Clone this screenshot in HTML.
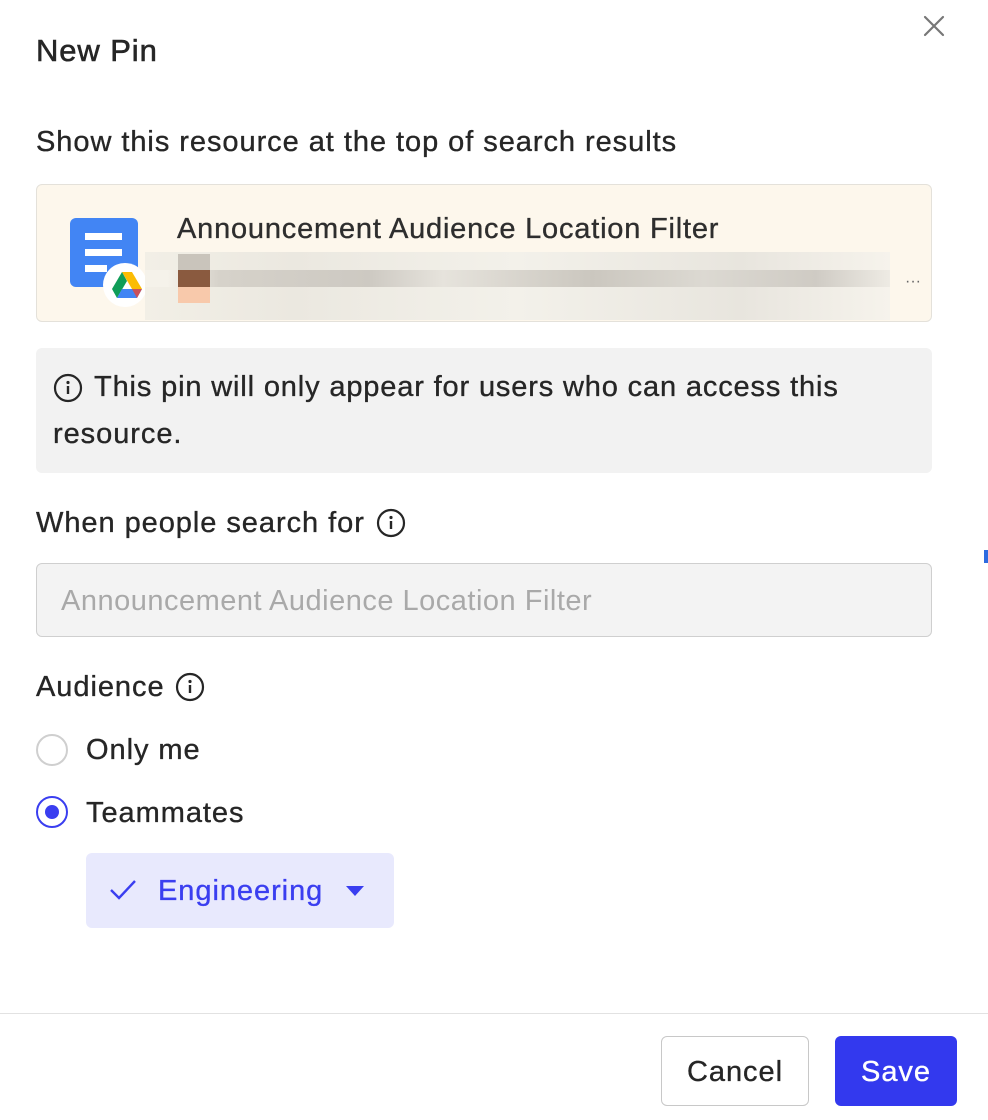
<!DOCTYPE html>
<html><head><style>
body{margin:0;width:988px;height:1120px;background:#fff;font-family:"Liberation Sans",Arial,sans-serif;color:#262626;position:relative;overflow:hidden}
.a{position:absolute}
.t{font-size:29px;letter-spacing:0.95px;white-space:nowrap;-webkit-text-stroke:0.35px currentColor}
</style></head><body>
<div class="a" style="left:36px;top:33px;font-size:31px;letter-spacing:0.9px;-webkit-text-stroke:0.6px #262626">New Pin</div>
<svg class="a" style="left:922px;top:14px" width="24" height="24"><path d="M3 3L21 21M21 3L3 21" stroke="#777" stroke-width="2.2" stroke-linecap="round"/></svg>
<div class="a t" style="left:36px;top:126px">Show this resource at the top of search results</div>
<div class="a" style="left:36px;top:184px;width:894px;height:136px;background:#fdf7ec;border:1px solid #e4e1da;border-radius:6px"></div>
<div class="a" style="left:70px;top:218px;width:68px;height:69px;background:#4285f4;border-radius:6px"></div>
<div class="a" style="left:85px;top:233px;width:37px;height:7px;background:#fff"></div>
<div class="a" style="left:85px;top:249px;width:37px;height:7px;background:#fff"></div>
<div class="a" style="left:85px;top:265px;width:22px;height:7px;background:#fff"></div>
<div class="a" style="left:103px;top:263px;width:44px;height:44px;background:#fff;border-radius:50%"></div>
<svg class="a" style="left:111px;top:271px" width="32" height="30" viewBox="0 0 32 30"><path d="M11 1h10l10 17h-10z" fill="#fbbc04"/><path d="M11 1L1 18l5 9 10-17z" fill="#0f9d58"/><path d="M6 27h20l5-9H11z" fill="#4285f4"/><path d="M21 18h10l-5 9z" fill="#ea4335" opacity=".8"/></svg>
<div class="a t" style="left:177px;top:213px;color:#2e2e2e;letter-spacing:0.8px">Announcement Audience Location Filter</div>
<div class="a" style="left:145px;top:252px;width:745px;height:68px;background:linear-gradient(90deg,#f2efe6,#ebe8e0 20%,#f3f1ea 50%,#e8e5de 80%,#f6f3ec)"></div>
<div class="a" style="left:145px;top:270px;width:745px;height:17px;background:linear-gradient(90deg,#f5f2ea 0 3%,#d6d2ca 10%,#cdc9c2 30%,#e6e3dc 40%,#cbc7bf 60%,#dcd9d2 75%,#cfcbc4 90%,#eeebe4)"></div>
<div class="a" style="left:178px;top:254px;width:32px;height:16px;background:#c9c4bb"></div>
<div class="a" style="left:178px;top:270px;width:32px;height:17px;background:#8a5a3f"></div>
<div class="a" style="left:178px;top:287px;width:32px;height:16px;background:#f8c9ab"></div>
<div class="a" style="left:905px;top:273px;font-size:16px;color:#666">···</div>
<div class="a" style="left:36px;top:348px;width:896px;height:125px;background:#f2f2f2;border-radius:6px"></div>
<svg class="a" style="left:53px;top:373px" width="30" height="30"><circle cx="15" cy="15" r="13" fill="none" stroke="#262626" stroke-width="2.2"/><circle cx="15" cy="9.5" r="1.6" fill="#262626"/><path d="M15 13v8" stroke="#262626" stroke-width="2.4"/></svg>
<div class="a t" style="left:94px;top:371px;letter-spacing:0.85px">This pin will only appear for users who can access this</div>
<div class="a t" style="left:53px;top:418px">resource.</div>
<div class="a t" style="left:36px;top:507px">When people search for</div>
<svg class="a" style="left:376px;top:508px" width="30" height="30"><circle cx="15" cy="15" r="13" fill="none" stroke="#262626" stroke-width="2.2"/><circle cx="15" cy="9.5" r="1.6" fill="#262626"/><path d="M15 13v8" stroke="#262626" stroke-width="2.4"/></svg>
<div class="a" style="left:984px;top:550px;width:4px;height:13px;background:#2d6be0"></div>
<div class="a" style="left:36px;top:563px;width:894px;height:72px;background:#f3f3f3;border:1px solid #cfcfcf;border-radius:6px"></div>
<div class="a t" style="left:61px;top:585px;color:#a9a9a9;-webkit-text-stroke:0;letter-spacing:0.5px">Announcement Audience Location Filter</div>
<div class="a t" style="left:36px;top:671px">Audience</div>
<svg class="a" style="left:175px;top:672px" width="30" height="30"><circle cx="15" cy="15" r="13" fill="none" stroke="#262626" stroke-width="2.2"/><circle cx="15" cy="9.5" r="1.6" fill="#262626"/><path d="M15 13v8" stroke="#262626" stroke-width="2.4"/></svg>
<div class="a" style="left:36px;top:734px;width:32px;height:32px;border:2px solid #cfcfcf;border-radius:50%;box-sizing:border-box"></div>
<div class="a t" style="left:86px;top:734px">Only me</div>
<div class="a" style="left:36px;top:796px;width:32px;height:32px;border:2px solid #3a3ef0;border-radius:50%;box-sizing:border-box"></div>
<div class="a" style="left:45px;top:805px;width:14px;height:14px;background:#3a3ef0;border-radius:50%"></div>
<div class="a t" style="left:86px;top:797px">Teammates</div>
<div class="a" style="left:86px;top:853px;width:308px;height:75px;background:#e8e9fd;border-radius:6px"></div>
<svg class="a" style="left:109px;top:878px" width="28" height="24"><path d="M2 12l8 8L26 3" fill="none" stroke="#3a3ef0" stroke-width="2.4"/></svg>
<div class="a t" style="left:158px;top:875px;color:#3a3ef0">Engineering</div>
<svg class="a" style="left:345px;top:885px" width="20" height="12"><path d="M1 1h18L10 11z" fill="#3a3ef0"/></svg>
<div class="a" style="left:0;top:1013px;width:988px;height:1px;background:#e2e2e2"></div>
<div class="a t" style="left:661px;top:1036px;width:148px;height:70px;border:1px solid #c8c8c8;border-radius:6px;box-sizing:border-box;text-align:center;line-height:70px">Cancel</div>
<div class="a t" style="left:835px;top:1036px;width:122px;height:70px;background:#3339ee;border-radius:6px;color:#fff;text-align:center;line-height:72px">Save</div>
</body></html>
